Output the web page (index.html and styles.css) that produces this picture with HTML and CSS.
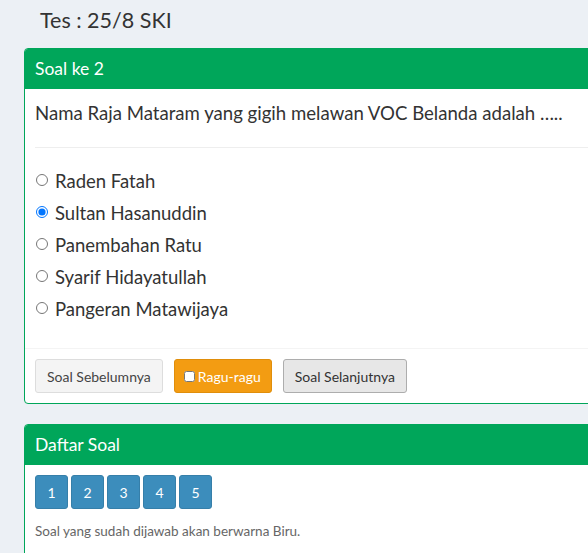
FILE: index.html
```html
<!DOCTYPE html>
<html lang="id">
<head>
<meta charset="utf-8">
<title>Tes : 25/8 SKI</title>
<link rel="stylesheet" href="styles.css">
</head>
<body>
<div class="content">
  <h1 class="page-title">Tes : 25/8 SKI</h1>

  <div class="panel">
    <div class="panel-heading">Soal ke 2</div>
    <div class="panel-body">
      <p class="question">Nama Raja Mataram yang gigih melawan VOC Belanda adalah …..</p>
      <hr class="divider">
      <div class="options">
        <label class="option"><input type="radio" name="jawab"> Raden Fatah</label>
        <label class="option"><input type="radio" name="jawab" checked> Sultan Hasanuddin</label>
        <label class="option"><input type="radio" name="jawab"> Panembahan Ratu</label>
        <label class="option"><input type="radio" name="jawab"> Syarif Hidayatullah</label>
        <label class="option"><input type="radio" name="jawab"> Pangeran Matawijaya</label>
      </div>
    </div>
    <div class="panel-footer">
      <button class="btn btn-default">Soal Sebelumnya</button>
      <button class="btn btn-warning"><input type="checkbox" class="ragu-check">Ragu-ragu</button>
      <button class="btn btn-active">Soal Selanjutnya</button>
    </div>
  </div>

  <div class="panel">
    <div class="panel-heading">Daftar Soal</div>
    <div class="panel-body panel-body-list">
      <div class="numbers">
        <button class="num">1</button>
        <button class="num">2</button>
        <button class="num">3</button>
        <button class="num">4</button>
        <button class="num">5</button>
      </div>
      <p class="note">Soal yang sudah dijawab akan berwarna Biru.</p>
    </div>
  </div>
</div>
</body>
</html>
```

FILE: styles.css
```css
html, body {
  overflow: hidden;
}
body {
  margin: 0;
  background: #ecf0f5;
  font-family: "Lato", "Liberation Sans", sans-serif;
  color: #333;
}
.content {
  padding: 0 0 0 24px;
  width: 620px;
}
.page-title {
  margin: 0;
  padding: 5px 0 0 16px;
  height: 48px;
  box-sizing: border-box;
  font-size: 21.5px;
  font-weight: 400;
  line-height: 30px;
  color: #333;
}
.panel {
  background: #fff;
  border: 1px solid #00a65a;
  border-radius: 4px;
  margin-bottom: 20px;
}
.panel-heading {
  background: #00a65a;
  color: #fff;
  padding: 10px 10px;
  font-size: 17.5px;
  line-height: 20px;
  border-radius: 3px 3px 0 0;
}
.panel-body {
  padding: 10px;
}
.panel-body-list {
  padding-bottom: 30px;
}
.question {
  margin: 1px 0 0;
  font-size: 18.6px;
  line-height: 26px;
}
.divider {
  border: 0;
  border-top: 1px solid #eee;
  margin: 21px 0 20px;
}
.options {
  display: flex;
  flex-direction: column;
  padding-bottom: 10px;
}
.option {
  font-size: 18.5px;
  line-height: 26px;
  height: 32px;
  display: flex;
  align-items: flex-start;
}
.option input {
  margin: 6px 7px 0 1px;
  width: 12px;
  height: 12px;
}
.panel-footer {
  border-top: 1px solid #f4f4f4;
  padding: 10px;
  display: flex;
  gap: 11px;
}
.btn {
  height: 34px;
  padding: 0 11px;
  font-family: inherit;
  font-size: 14px;
  border-radius: 3px;
  border: 1px solid #ddd;
  display: flex;
  align-items: center;
}
.btn-default {
  background: #f4f4f4;
  color: #444;
  border-color: #ddd;
}
.btn-warning {
  background: #f39c12;
  border-color: #e08e0b;
  color: #fff;
  padding: 0 10px 0 9px;
}
.btn-active {
  background: #e7e7e7;
  border-color: #adadad;
  color: #333;
}
.ragu-check {
  margin: 0 3px 0 0;
  width: 11px;
  height: 11px;
}
.numbers {
  display: flex;
  gap: 3px;
}
.num {
  width: 33px;
  height: 34px;
  background: #3c8dbc;
  border: 1px solid #367fa9;
  border-radius: 3px;
  color: #fff;
  font-family: inherit;
  font-size: 14px;
  padding: 0;
}
.note {
  margin: 12px 0 0;
  font-size: 13.5px;
  line-height: 20px;
  color: #666;
}
```
